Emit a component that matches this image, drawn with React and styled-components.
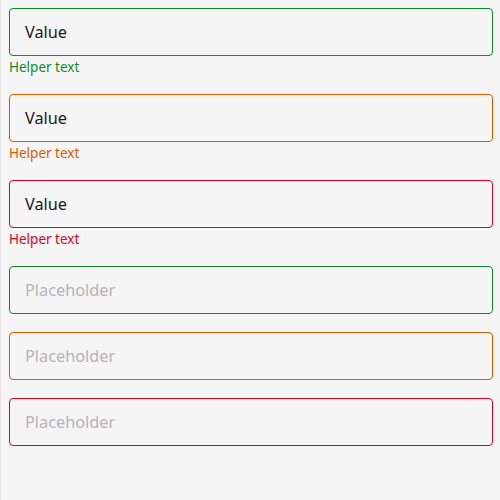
import React from "react";
import styled, { createGlobalStyle } from "styled-components";

const Global = createGlobalStyle`
  html, body { margin: 0; padding: 0; background: #f5f5f5; }
  body { font-family: "Noto Sans", "Open Sans", sans-serif; }
`;

const COLORS = {
  success: "#0f8a2a",
  warning: "#e05a00",
  error: "#e6001f",
};

const Page = styled.div`
  box-sizing: border-box;
  min-height: 500px;
  border-left: 1px solid #e4e4e4;
  padding: 8px 7px 8px 8px;
  display: flex;
  flex-direction: column;
  gap: 18px;
`;

const Field = styled.div`
  display: flex;
  flex-direction: column;
`;

const InputBox = styled.div`
  box-sizing: border-box;
  height: 48px;
  border: 1px solid ${(p) => COLORS[p.$status]};
  border-radius: 4px;
  background: #f5f5f5;
  display: flex;
  align-items: center;
  padding: 0 15px;
  font-size: 16.3px;
  color: ${(p) => (p.$placeholder ? "#b4b4b4" : "#1a1a1a")};
`;

const Helper = styled.div`
  margin-top: 3px;
  font-size: 13.5px;
  line-height: 17px;
  color: ${(p) => COLORS[p.$status]};
`;

const fields = [
  { status: "success", text: "Value", helper: true },
  { status: "warning", text: "Value", helper: true },
  { status: "error", text: "Value", helper: true },
  { status: "success", text: "Placeholder", placeholder: true },
  { status: "warning", text: "Placeholder", placeholder: true },
  { status: "error", text: "Placeholder", placeholder: true },
];

export default function App() {
  return (
    <>
      <Global />
      <Page>
        {fields.map((f, i) => (
          <Field key={i}>
            <InputBox $status={f.status} $placeholder={f.placeholder}>
              {f.text}
            </InputBox>
            {f.helper && <Helper $status={f.status}>Helper text</Helper>}
          </Field>
        ))}
      </Page>
    </>
  );
}
